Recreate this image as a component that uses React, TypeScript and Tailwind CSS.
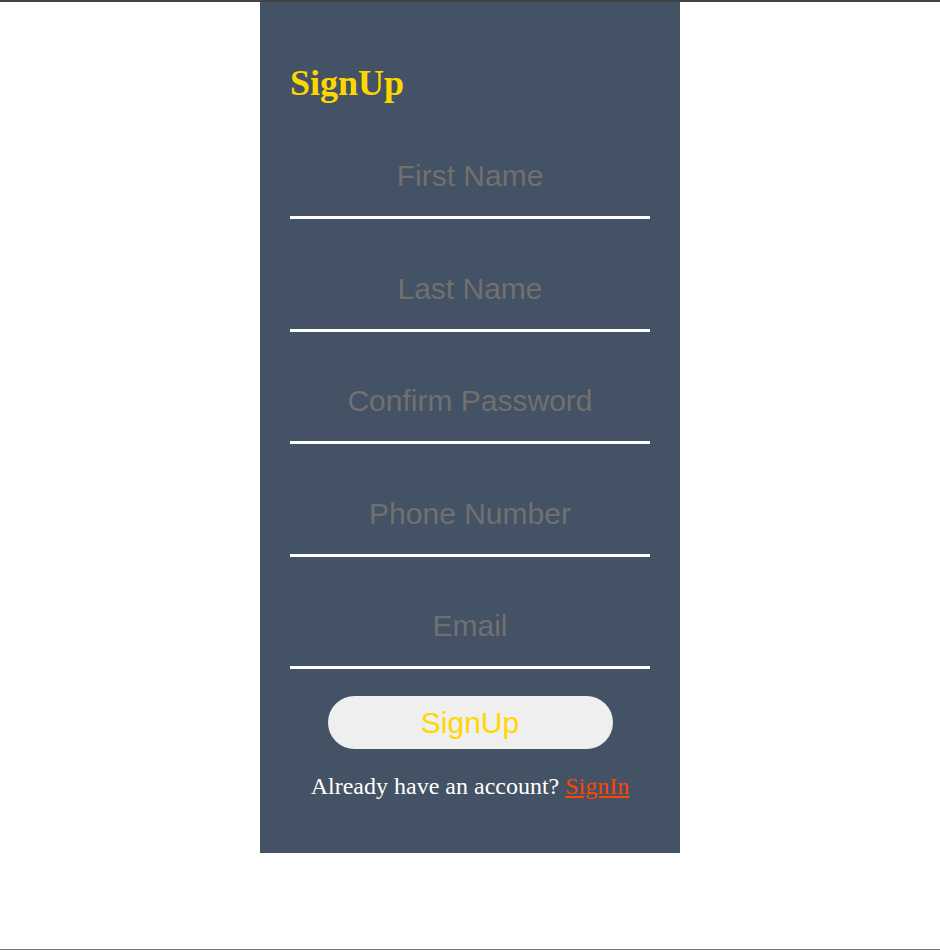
import React from "react";

const fields = [
  "First Name",
  "Last Name",
  "Confirm Password",
  "Phone Number",
  "Email",
];

const App = () => {
  return (
    <div className="h-[950px] w-[940px] border-t-2 border-b border-t-[#444444] border-b-[#777777] bg-white">
      <div className="mx-auto flex h-[851px] w-[420px] flex-col bg-[#435264] px-[30px] pt-[60px]">
        <h1 className="font-['Liberation_Serif',serif] text-[36px] leading-[42px] font-bold text-[#ffd700]">
          SignUp
        </h1>
        <form className="flex flex-col" onSubmit={(e) => e.preventDefault()}>
          {fields.map((name, i) => (
            <input
              key={name}
              type="text"
              placeholder={name}
              className={`h-[84px] w-full border-b-[3px] border-white bg-transparent text-center font-['Liberation_Sans',Arial,sans-serif] text-[30px] text-white outline-none placeholder:text-[#707070] ${
                i === 0 ? "mt-[31px]" : i % 2 ? "mt-[29px]" : "mt-[28px]"
              }`}
            />
          ))}
          <button
            type="submit"
            className="mx-auto mt-[27px] h-[53px] w-[285px] rounded-full bg-[#efefef] font-['Liberation_Sans',Arial,sans-serif] text-[30px] text-[#ffd700]"
          >
            SignUp
          </button>
        </form>
        <p className="mt-[23px] text-center font-['Liberation_Serif',serif] text-[24px] leading-[28px] text-white">
          Already have an account?{" "}
          <a href="#" className="text-[#ff4500] underline">
            SignIn
          </a>
        </p>
      </div>
    </div>
  );
};

export default App;
